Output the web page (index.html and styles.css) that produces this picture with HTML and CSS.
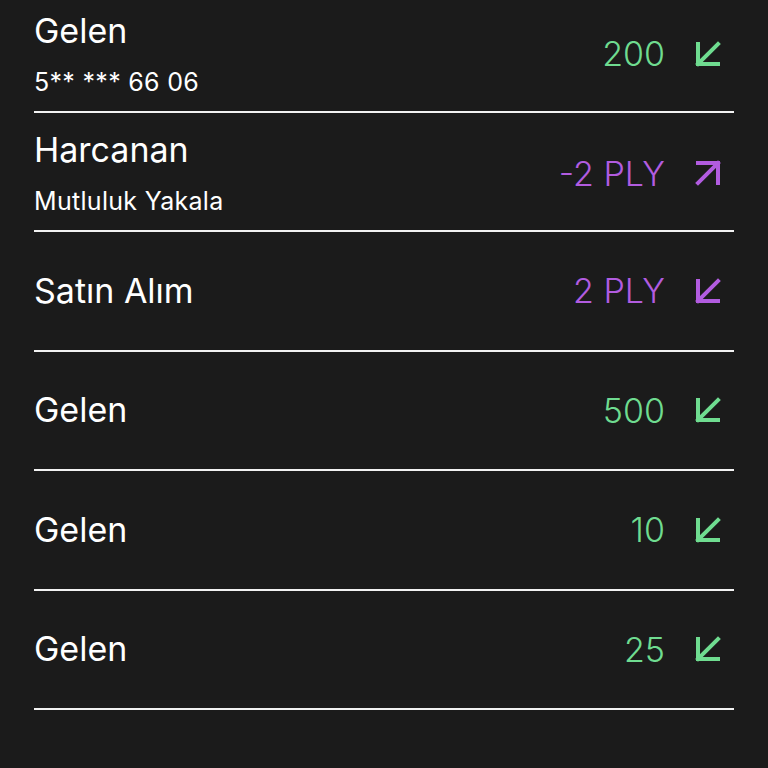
FILE: index.html
```html
<!DOCTYPE html>
<html lang="en">
<head>
  <meta charset="UTF-8" />
  <meta name="viewport" content="width=device-width, initial-scale=1.0"/>
  <title>Hareketler</title>
  <link rel="stylesheet" href="styles.css">
</head>
<body>
  <div class="list">
    <div class="row">
      <div class="info two">
        <div class="title">Gelen</div>
        <div class="sub">5** *** 66 06</div>
      </div>
      <div class="amount in">200
        <svg class="arrow" viewBox="0 0 26 26"><path d="M3 3V23H23M3 23L23 3" /></svg>
      </div>
    </div>
    <div class="row">
      <div class="info two">
        <div class="title">Harcanan</div>
        <div class="sub">Mutluluk Yakala</div>
      </div>
      <div class="amount out">-2 PLY
        <svg class="arrow" viewBox="0 0 26 26"><path d="M3 3H23V23M23 3L3 23" /></svg>
      </div>
    </div>
    <div class="row">
      <div class="info">
        <div class="title">Satın Alım</div>
      </div>
      <div class="amount out">2 PLY
        <svg class="arrow" viewBox="0 0 26 26"><path d="M3 3V23H23M3 23L23 3" /></svg>
      </div>
    </div>
    <div class="row">
      <div class="info">
        <div class="title">Gelen</div>
      </div>
      <div class="amount in">500
        <svg class="arrow" viewBox="0 0 26 26"><path d="M3 3V23H23M3 23L23 3" /></svg>
      </div>
    </div>
    <div class="row">
      <div class="info">
        <div class="title">Gelen</div>
      </div>
      <div class="amount in">10
        <svg class="arrow" viewBox="0 0 26 26"><path d="M3 3V23H23M3 23L23 3" /></svg>
      </div>
    </div>
    <div class="row">
      <div class="info">
        <div class="title">Gelen</div>
      </div>
      <div class="amount in">25
        <svg class="arrow" viewBox="0 0 26 26"><path d="M3 3V23H23M3 23L23 3" /></svg>
      </div>
    </div>
  </div>
</body>
</html>
```

FILE: styles.css
```css
body {
  background-color: #1b1b1b;
  color: #fff;
  font-family: Inter, 'Noto Sans', sans-serif;
  margin: 0;
  padding: 0;
  height: 768px;
  overflow: hidden;
}

.list {
  margin: -7px 34px 0 34px;
}

.row {
  display: flex;
  align-items: center;
  justify-content: space-between;
  height: 119.5px;
  box-sizing: border-box;
  border-bottom: 2px solid #f2f2f2;
  padding-right: 13px;
}

.info {
  display: flex;
  flex-direction: column;
  gap: 16px;
}

.info.two {
  padding-top: 4px;
}

.title {
  font-size: 34px;
  line-height: 40px;
}

.sub {
  font-size: 25px;
  line-height: 30px;
  letter-spacing: 0.3px;
}

.amount {
  display: flex;
  align-items: center;
  gap: 30px;
  font-size: 34px;
  font-weight: 300;
}

.info.two + .amount {
  padding-top: 4px;
}

.amount.in { color: #6fdc90; }
.amount.out { color: #b25ce0; }

.arrow {
  width: 26px;
  height: 26px;
  fill: none;
  stroke: currentColor;
  stroke-width: 4;
  stroke-linecap: square;
}
```
